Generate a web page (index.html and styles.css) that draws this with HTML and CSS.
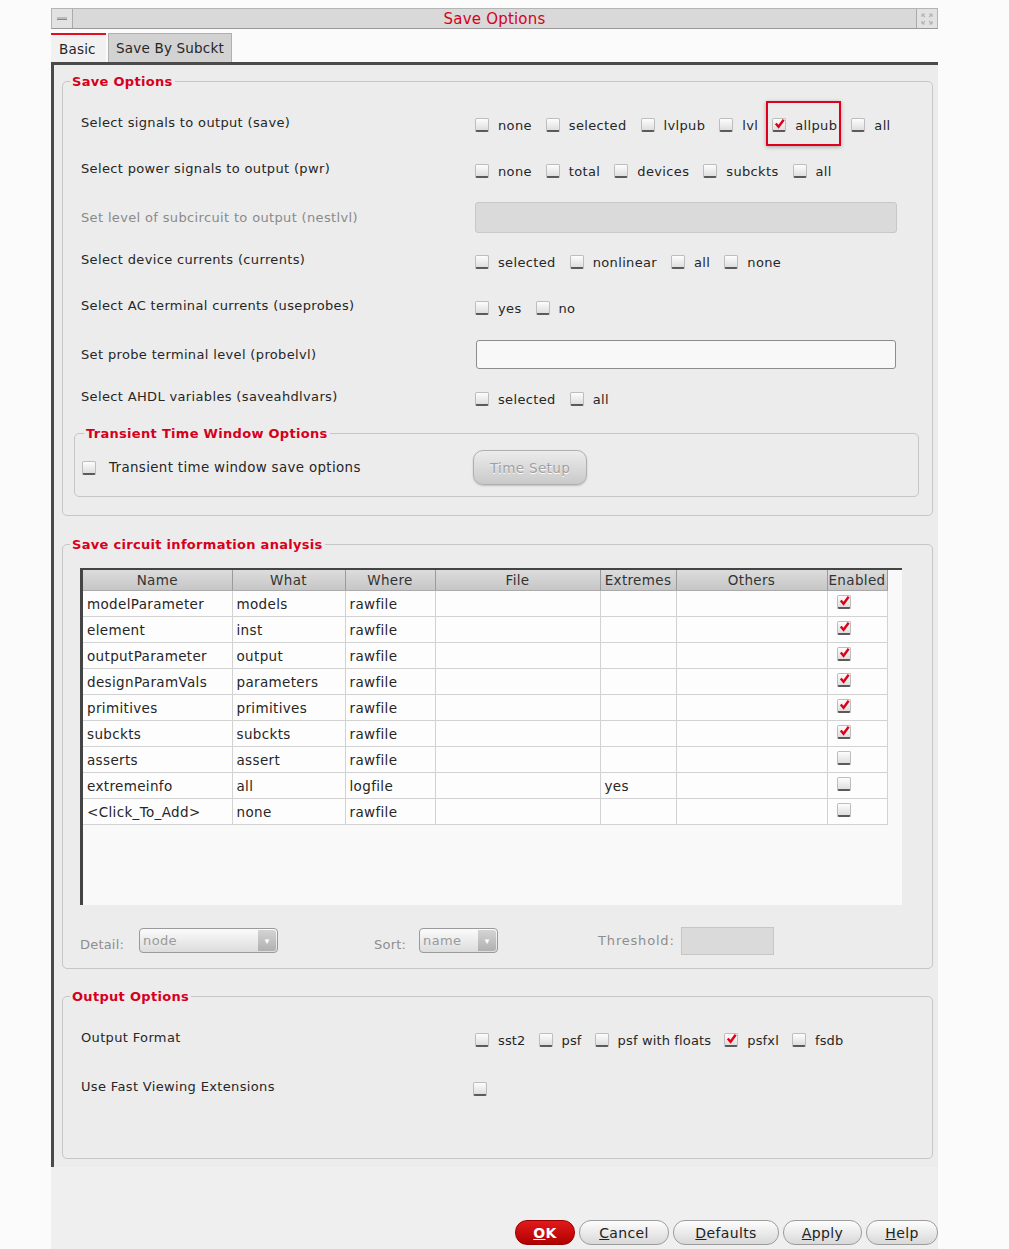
FILE: index.html
```html
<!DOCTYPE html>
<html lang="en">
<head>
  <meta charset="UTF-8">
  <title>Save Options</title>
  <link rel="stylesheet" href="styles.css">
</head>
<body>
  <div class="dialog">
    <div class="titlebar">
      <span class="tb-btn"><span class="dash"></span></span>
      <span class="title">Save Options</span>
      <span class="tb-btn">
        <svg width="12" height="12" viewBox="0 0 12 12"><path d="M1 1l3 3M1 1h3M1 1v3M11 1l-3 3M11 1h-3M11 1v3M1 11l3-3M1 11h3M1 11v-3M11 11l-3-3M11 11h-3M11 11v-3" stroke="#b5b5b5" stroke-width="1.2" fill="none"/></svg>
      </span>
    </div>

    <div class="tabs">
      <span class="tab active">Basic</span>
      <span class="tab">Save By Subckt</span>
    </div>

    <div class="panel">
      <fieldset class="group g-save">
        <legend>Save Options</legend>

        <div class="row first">
          <span class="lbl">Select signals to output (save)</span>
          <div class="opts">
            <label class="ck"><span class="box"></span>none</label>
            <label class="ck"><span class="box"></span>selected</label>
            <label class="ck"><span class="box"></span>lvlpub</label>
            <label class="ck"><span class="box"></span>lvl</label>
            <label class="ck hl"><span class="box"><svg viewBox="0 0 14 14"><path d="M3 7l3 3.5L11.5 3" /></svg></span>allpub</label>
            <label class="ck"><span class="box"></span>all</label>
          </div>
        </div>

        <div class="row">
          <span class="lbl">Select power signals to output (pwr)</span>
          <div class="opts">
            <label class="ck"><span class="box"></span>none</label>
            <label class="ck"><span class="box"></span>total</label>
            <label class="ck"><span class="box"></span>devices</label>
            <label class="ck"><span class="box"></span>subckts</label>
            <label class="ck"><span class="box"></span>all</label>
          </div>
        </div>

        <div class="row r-input">
          <span class="lbl dim">Set level of subcircuit to output (nestlvl)</span>
          <span class="field disabled"></span>
        </div>

        <div class="row r-after">
          <span class="lbl">Select device currents (currents)</span>
          <div class="opts">
            <label class="ck"><span class="box"></span>selected</label>
            <label class="ck"><span class="box"></span>nonlinear</label>
            <label class="ck"><span class="box"></span>all</label>
            <label class="ck"><span class="box"></span>none</label>
          </div>
        </div>

        <div class="row">
          <span class="lbl">Select AC terminal currents (useprobes)</span>
          <div class="opts">
            <label class="ck"><span class="box"></span>yes</label>
            <label class="ck"><span class="box"></span>no</label>
          </div>
        </div>

        <div class="row r-input">
          <span class="lbl">Set probe terminal level (probelvl)</span>
          <span class="field"></span>
        </div>

        <div class="row r-after">
          <span class="lbl">Select AHDL variables (saveahdlvars)</span>
          <div class="opts">
            <label class="ck"><span class="box"></span>selected</label>
            <label class="ck"><span class="box"></span>all</label>
          </div>
        </div>

        <fieldset class="group sub">
          <legend>Transient Time Window Options</legend>
          <div class="sub-row">
            <label class="ck wide"><span class="box"></span>Transient time window save options</label>
            <span class="btn-setup">Time Setup</span>
          </div>
        </fieldset>
      </fieldset>

      <fieldset class="group g-info">
        <legend>Save circuit information analysis</legend>
        <div class="table-wrap">
          <table class="grid">
            <colgroup>
              <col class="c-name"><col class="c-what"><col class="c-where"><col class="c-file">
              <col class="c-ext"><col class="c-oth"><col class="c-en">
            </colgroup>
            <thead>
              <tr><th>Name</th><th>What</th><th>Where</th><th>File</th><th>Extremes</th><th>Others</th><th>Enabled</th></tr>
            </thead>
            <tbody>
              <tr><td>modelParameter</td><td>models</td><td>rawfile</td><td></td><td></td><td></td><td class="en"><span class="box"><svg viewBox="0 0 14 14"><path d="M3 7l3 3.5L11.5 3" /></svg></span></td></tr>
              <tr><td>element</td><td>inst</td><td>rawfile</td><td></td><td></td><td></td><td class="en"><span class="box"><svg viewBox="0 0 14 14"><path d="M3 7l3 3.5L11.5 3" /></svg></span></td></tr>
              <tr><td>outputParameter</td><td>output</td><td>rawfile</td><td></td><td></td><td></td><td class="en"><span class="box"><svg viewBox="0 0 14 14"><path d="M3 7l3 3.5L11.5 3" /></svg></span></td></tr>
              <tr><td>designParamVals</td><td>parameters</td><td>rawfile</td><td></td><td></td><td></td><td class="en"><span class="box"><svg viewBox="0 0 14 14"><path d="M3 7l3 3.5L11.5 3" /></svg></span></td></tr>
              <tr><td>primitives</td><td>primitives</td><td>rawfile</td><td></td><td></td><td></td><td class="en"><span class="box"><svg viewBox="0 0 14 14"><path d="M3 7l3 3.5L11.5 3" /></svg></span></td></tr>
              <tr><td>subckts</td><td>subckts</td><td>rawfile</td><td></td><td></td><td></td><td class="en"><span class="box"><svg viewBox="0 0 14 14"><path d="M3 7l3 3.5L11.5 3" /></svg></span></td></tr>
              <tr><td>asserts</td><td>assert</td><td>rawfile</td><td></td><td></td><td></td><td class="en"><span class="box"></span></td></tr>
              <tr><td>extremeinfo</td><td>all</td><td>logfile</td><td></td><td>yes</td><td></td><td class="en"><span class="box"></span></td></tr>
              <tr><td>&lt;Click_To_Add&gt;</td><td>none</td><td>rawfile</td><td></td><td></td><td></td><td class="en"><span class="box"></span></td></tr>
            </tbody>
          </table>
        </div>

        <div class="filter">
          <span class="flbl">Detail:</span>
          <span class="combo c-detail">node<span class="arrow">&#9662;</span></span>
          <span class="flbl f-sort">Sort:</span>
          <span class="combo c-sort">name<span class="arrow">&#9662;</span></span>
          <span class="flbl f-thr">Threshold:</span>
          <span class="thr"></span>
        </div>
      </fieldset>

      <fieldset class="group g-out">
        <legend>Output Options</legend>
        <div class="row first">
          <span class="lbl">Output Format</span>
          <div class="opts tight">
            <label class="ck"><span class="box"></span>sst2</label>
            <label class="ck"><span class="box"></span>psf</label>
            <label class="ck"><span class="box"></span>psf with floats</label>
            <label class="ck"><span class="box"><svg viewBox="0 0 14 14"><path d="M3 7l3 3.5L11.5 3" /></svg></span>psfxl</label>
            <label class="ck"><span class="box"></span>fsdb</label>
          </div>
        </div>
        <div class="row r-fast">
          <span class="lbl">Use Fast Viewing Extensions</span>
          <div class="opts single"><span class="box"></span></div>
        </div>
      </fieldset>
    </div>

    <div class="footer">
      <span class="btn ok"><u>O</u>K</span>
      <span class="btn b-cancel"><u>C</u>ancel</span>
      <span class="btn b-def"><u>D</u>efaults</span>
      <span class="btn b-apply"><u>A</u>pply</span>
      <span class="btn b-help"><u>H</u>elp</span>
    </div>
  </div>
</body>
</html>
```

FILE: styles.css
```css
body {
  margin: 0;
  background: #fbfbfb;
  font-family: 'DejaVu Sans', Verdana, sans-serif;
  font-size: 13px;
  letter-spacing: 0.35px;
  color: #262626;
}
.dialog {
  margin: 8px 0 0 51px;
  width: 887px;
}

/* title bar */
.titlebar {
  height: 19px;
  display: flex;
  align-items: center;
  background: #d9d9d9;
  border: 1px solid #b4b4b4;
  border-bottom-color: #999;
}
.tb-btn {
  width: 20px;
  height: 19px;
  display: flex;
  align-items: center;
  justify-content: center;
  background: #e2e2e2;
  border-right: 1px solid #aaa;
}
.tb-btn:last-child {
  border-right: none;
  border-left: 1px solid #aaa;
}
.dash {
  width: 10px;
  height: 2px;
  background: #bbb;
  border-bottom: 1px solid #888;
}
.title {
  flex: 1;
  text-align: center;
  color: #d6001c;
  font-size: 15px;
  letter-spacing: 0.2px;
}

/* tabs */
.tabs {
  display: flex;
  gap: 2px;
  margin-top: 4px;
  height: 29px;
}
.tab {
  display: flex;
  align-items: center;
  padding: 0 7px;
  font-size: 13.5px;
  letter-spacing: 0.2px;
  background: #d2d2d2;
  border: 1px solid #b0b0b0;
  border-bottom: none;
}
.tab.active {
  width: 40px;
  padding-left: 8px;
  background: #f1f1f1;
  border: none;
  border-top: 2px solid #e01020;
}

/* main panel */
.panel {
  background: #ececec;
  border-top: 3px solid #4a4a4a;
  border-left: 3px solid #4a4a4a;
  padding: 8px 5px 8px 8px;
}
.group {
  margin: 0;
  border: 1px solid #c6c6c6;
  border-radius: 5px;
  padding: 9px 7px 18px 7px;
}
.group legend {
  padding: 0 2px;
  color: #d6001c;
  font-weight: bold;
  line-height: 17px;
  letter-spacing: 0.3px;
}
.row {
  display: grid;
  grid-template-columns: 394px 1fr;
  align-items: center;
  height: 30px;
  margin-top: 16px;
  padding-left: 11px;
}
.row.first {
  margin-top: 8px;
}
.row.r-input {
  margin-top: 19px;
}
.row.r-after {
  margin-top: 12px;
}
.row.r-fast {
  margin-top: 19px;
}
.lbl.dim {
  color: #8a8a8a;
}
.opts {
  display: flex;
  gap: 14px;
  margin-top: 6px;
}
.opts.tight {
  gap: 13px;
  letter-spacing: 0.15px;
}
.ck {
  display: inline-flex;
  align-items: center;
  gap: 9px;
  position: relative;
}
.ck.wide {
  gap: 13px;
  font-size: 13.4px;
}
.box {
  display: inline-block;
  width: 12px;
  height: 11px;
  border: 1px solid #bdbdbd;
  border-bottom: 2px solid #5a5a5a;
  border-radius: 2px;
  background: linear-gradient(#fdfdfd, #dedede);
}
.box svg {
  display: block;
  width: 13px;
  height: 13px;
  margin: -2px 0 0 0;
}
.box path {
  fill: none;
  stroke: #e00018;
  stroke-width: 2.6;
}
.hl::after {
  content: "";
  position: absolute;
  top: -17px;
  bottom: -13px;
  left: -6px;
  right: -4px;
  border: 2px solid #e0001c;
  box-shadow: 0 1px 4px rgba(0, 0, 0, 0.3);
}
.field {
  width: 418px;
  height: 27px;
  margin-left: 1px;
  background: #f8f8f8;
  border: 1px solid #8c8c8c;
  border-radius: 3px;
}
.field.disabled {
  width: 420px;
  height: 29px;
  margin-left: 0;
  background: #dadada;
  border-color: #c8c8c8;
}

/* transient sub group */
.group.sub {
  margin: 14px 6px 0 4px;
  padding: 3px 7px 6px 9px;
}
.sub-row {
  display: grid;
  grid-template-columns: 391px 1fr;
  align-items: center;
  height: 45px;
  margin-left: -2px;
}
.btn-setup {
  width: 112px;
  height: 33px;
  display: flex;
  align-items: center;
  justify-content: center;
  border: 1px solid #b0b0b0;
  border-radius: 10px;
  background: linear-gradient(#ececec, #c9c9c9);
  color: #a0a0a0;
  font-size: 13.5px;
  text-shadow: 0 1px 0 #fff;
  box-shadow: 0 1px 2px rgba(0, 0, 0, 0.2);
}

/* circuit info table */
.g-info {
  margin-top: 20px;
  padding: 15px 7px 13px 7px;
}
.table-wrap {
  margin-left: 10px;
  width: 819px;
  height: 335px;
  border-top: 2px solid #444;
  border-left: 3px solid #444;
  background: #f9f9f9;
}
.grid {
  border-collapse: collapse;
  table-layout: fixed;
  width: 804px;
  font-size: 13.5px;
}
.c-name { width: 149px; }
.c-what { width: 113px; }
.c-where { width: 90px; }
.c-file { width: 165px; }
.c-ext { width: 76px; }
.c-oth { width: 151px; }
.c-en { width: 60px; }
.grid th {
  height: 20px;
  padding: 0;
  font-weight: normal;
  color: #333;
  background: linear-gradient(#dcdcdc, #c6c6c6);
  border-right: 1px solid #9a9a9a;
  border-bottom: 1px solid #aaa;
}
.grid td {
  height: 25px;
  padding: 0 0 0 4px;
  background: #fdfdfd;
  border-right: 1px solid #d2d2d2;
  border-bottom: 1px solid #d2d2d2;
  white-space: nowrap;
  overflow: hidden;
}
.grid td.en {
  padding: 0 0 0 9px;
}

/* filter row */
.filter {
  display: flex;
  align-items: center;
  margin: 21px 0 0 10px;
  height: 29px;
  color: #8e8e8e;
}
.flbl {
  margin-top: 8px;
  letter-spacing: 0.2px;
}
.combo {
  position: relative;
  height: 23px;
  margin-left: 15px;
  padding-left: 3px;
  display: flex;
  align-items: center;
  border: 1px solid #9a9a9a;
  border-radius: 4px;
  background: linear-gradient(#fbfbfb, #dcdcdc);
  color: #9a9a9a;
}
.c-detail { width: 134px; }
.c-sort { width: 74px; margin-left: 13px; }
.f-sort { margin-left: 96px; }
.f-thr { margin-left: 100px; margin-top: 0; letter-spacing: 0.8px; }
.arrow {
  position: absolute;
  right: 1px;
  top: 1px;
  bottom: 1px;
  width: 18px;
  display: flex;
  align-items: center;
  justify-content: center;
  font-size: 9px;
  color: #fff;
  background: linear-gradient(#d4d4d4, #b0b0b0);
  border-radius: 0 3px 3px 0;
}
.thr {
  width: 91px;
  height: 26px;
  margin-left: 6px;
  background: #dadada;
  border: 1px solid #c6c6c6;
}

/* output options */
.g-out {
  margin-top: 19px;
  padding: 9px 7px 57px 7px;
}
.opts.single {
  margin-left: -2px;
}

/* footer buttons */
.footer {
  height: 30px;
  padding-top: 53px;
  display: flex;
  justify-content: flex-end;
  align-items: flex-start;
  gap: 4px;
  background: #efefef;
}
.btn {
  height: 23px;
  display: flex;
  align-items: center;
  justify-content: center;
  font-size: 14px;
  border: 1px solid #9c9c9c;
  border-radius: 12px;
  background: linear-gradient(#fdfdfd, #d8d8d8);
  color: #222;
}
.btn.ok {
  width: 58px;
  background: linear-gradient(#e21a1a, #b00000);
  border-color: #900;
  color: #fff;
  font-weight: bold;
}
.b-cancel { width: 88px; }
.b-def { width: 104px; }
.b-apply { width: 77px; }
.b-help { width: 70px; }
```
